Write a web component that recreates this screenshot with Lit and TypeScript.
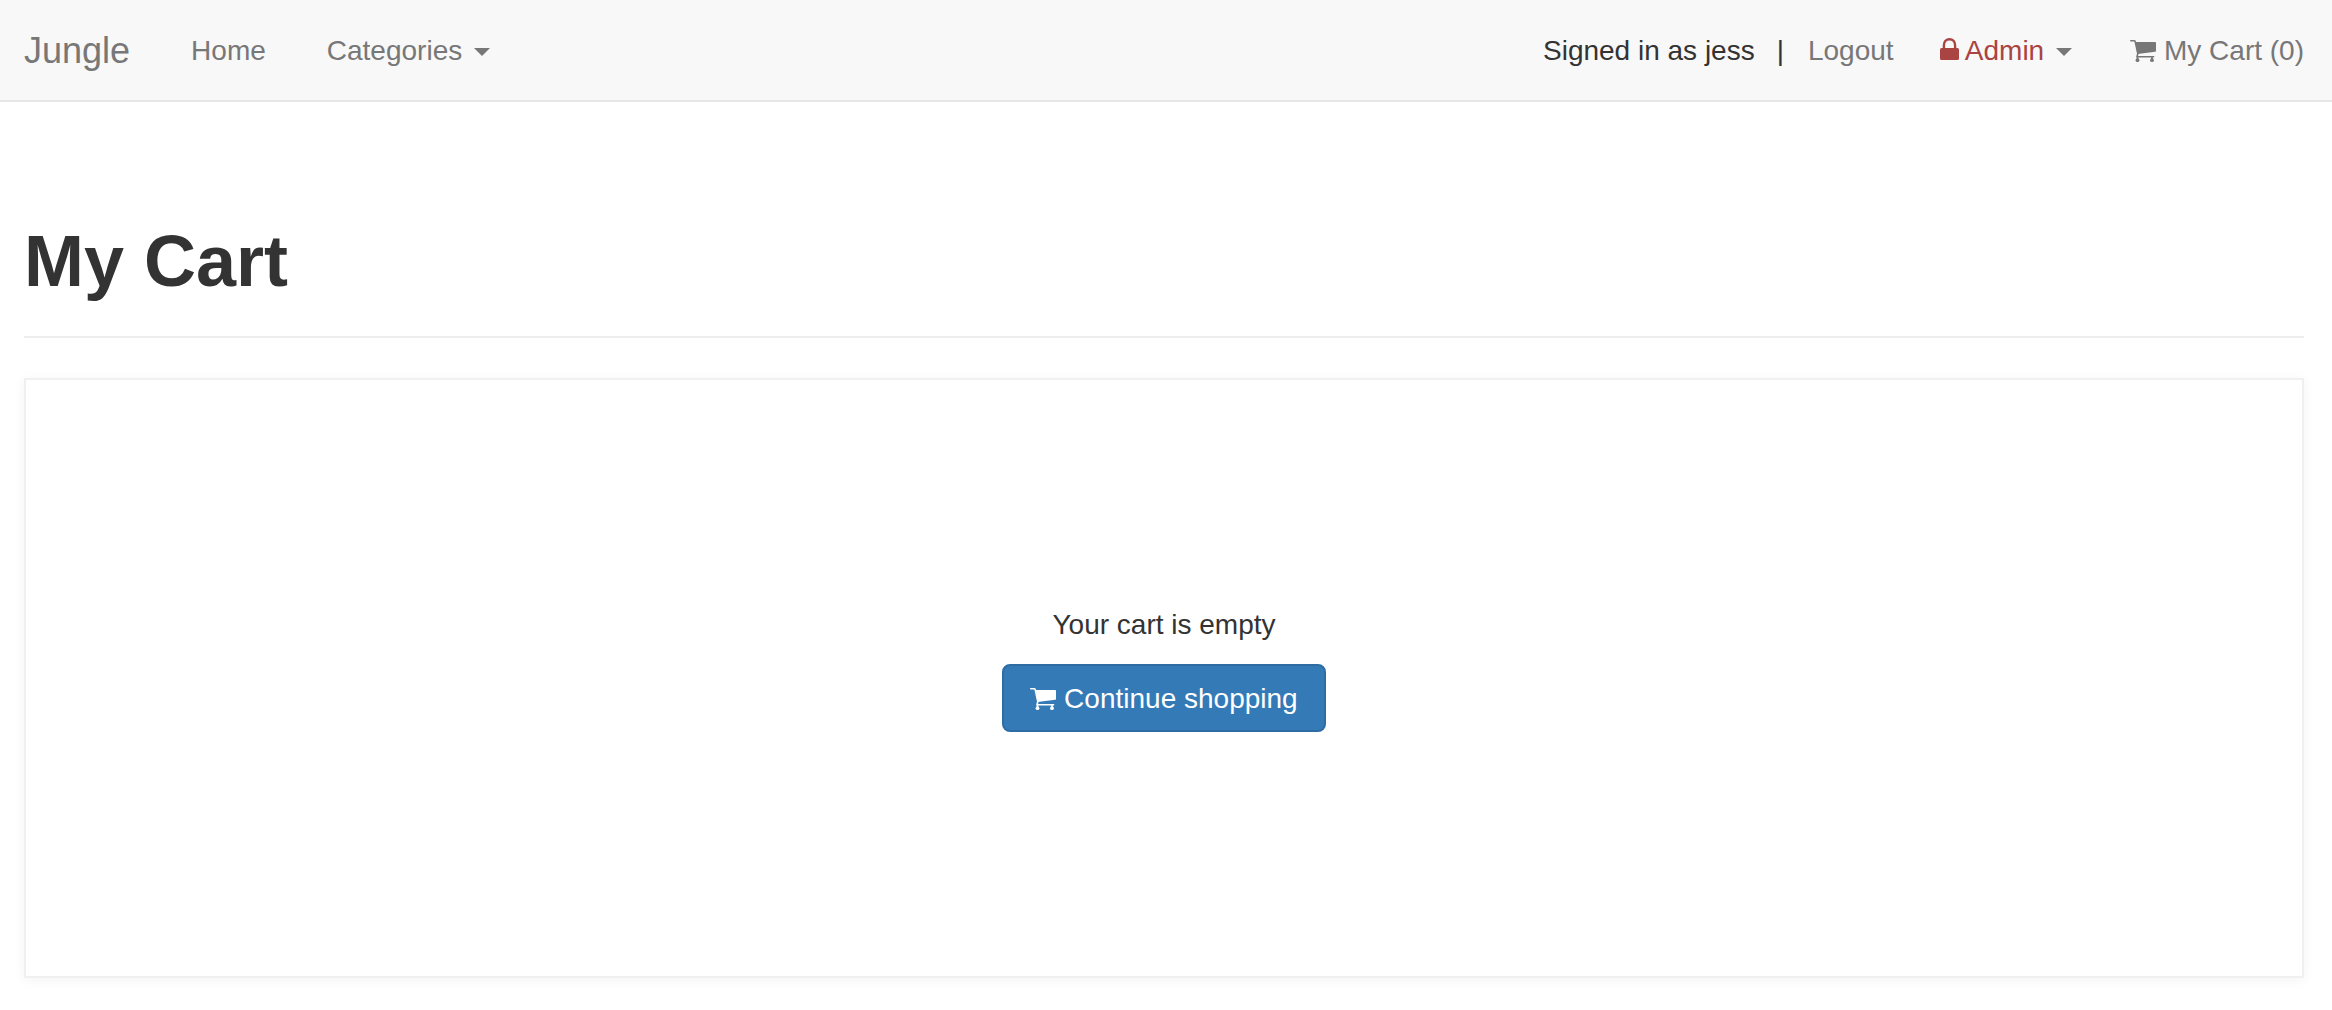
import { LitElement, html, css, svg } from "lit";
import { customElement, property } from "lit/decorators.js";

const cartIcon = html`<svg class="icon cart" viewBox="0 0 26 28" aria-hidden="true">${svg`
  <path d="M5.4 6H25.2Q26 6 26 6.8V14.8Q26 15.7 25.2 15.8L7.6 17.9Z"/>
  <path d="M.8 4.8H4.2Q5 4.8 5.2 5.6L7.8 17.6L7 20.8H23.6" fill="none" stroke="currentColor" stroke-width="1.6" stroke-linecap="round" stroke-linejoin="round"/>
  <path d="M6.7 20.8H8.3V24H6.7ZM21.2 20.8H22.8V24H21.2Z"/>
  <circle cx="7.5" cy="24.2" r="1.9"/>
  <circle cx="22" cy="24.2" r="1.9"/>`}</svg>`;

const lockIcon = html`<svg class="icon lock" viewBox="0 0 19 28" aria-hidden="true">${svg`
  <rect x="0" y="12" width="19" height="12" rx="1.6"/>
  <path d="M3.9 12.6V9.2C3.9 5.6 6.2 3.2 9.5 3.2S15.1 5.6 15.1 9.2V12.6" fill="none" stroke="currentColor" stroke-width="2.4"/>`}</svg>`;

const iconStyles = css`
  .icon {
    height: 28px;
    fill: currentColor;
    vertical-align: -4px;
  }
  .cart {
    width: 26px;
  }
  .lock {
    width: 19px;
  }
`;

@customElement("site-navbar")
export class SiteNavbar extends LitElement {
  @property() user = "";
  @property({ type: Number }) count = 0;

  static styles = [
    iconStyles,
    css`
      :host {
        display: block;
      }
      .bar {
        display: flex;
        justify-content: space-between;
        flex-wrap: wrap;
        padding: 2px 28px 0 24px;
        background: #f8f8f8;
        border-bottom: 2px solid #e7e7e7;
        line-height: 40px;
        color: #333;
      }
      .group {
        display: flex;
        flex-wrap: wrap;
        align-items: center;
        min-height: 98px;
      }
      .left {
        gap: 61px;
      }
      .brand {
        font-size: 36px;
      }
      a {
        color: #777;
        text-decoration: none;
      }
      .toggle {
        display: flex;
        align-items: center;
        gap: 12px;
        padding: 0;
        border: 0;
        background: none;
        font: inherit;
        color: #777;
        cursor: pointer;
      }
      .caret {
        border-top: 8px solid currentColor;
        border-left: 8px solid transparent;
        border-right: 8px solid transparent;
        margin-top: 2px;
      }
      .danger {
        color: #a94442;
      }
      .divider {
        margin: 0 24px 0 22px;
      }
      .admin {
        margin: 0 58px 0 46px;
      }
    `,
  ];

  render() {
    return html`
      <nav class="bar" aria-label="Main">
        <div class="group left">
          <a class="brand" href="#">Jungle</a>
          <a href="#">Home</a>
          <button class="toggle" type="button" aria-haspopup="true">
            Categories<span class="caret"></span>
          </button>
        </div>
        <div class="group">
          <span>Signed in as ${this.user}</span>
          <span class="divider">|</span>
          <a href="#">Logout</a>
          <button class="toggle admin" type="button" aria-haspopup="true">
            <span class="danger">${lockIcon} Admin</span><span class="caret"></span>
          </button>
          <a href="#">${cartIcon} My Cart (${this.count})</a>
        </div>
      </nav>
    `;
  }
}

@customElement("app-root")
export class AppRoot extends LitElement {
  static styles = [
    iconStyles,
    css`
      :host {
        display: block;
        font-family: "Liberation Sans", Arial, sans-serif;
        font-size: 28px;
        line-height: 40px;
        color: #333;
        background: #fff;
      }
      main {
        padding: 119px 28px 32px 24px;
      }
      h1 {
        margin: 0 0 40px;
        padding-bottom: 35px;
        border-bottom: 2px solid #eee;
        font-size: 72px;
        line-height: 80px;
        font-weight: 700;
      }
      .panel {
        display: flex;
        flex-direction: column;
        align-items: center;
        gap: 19px;
        padding: 225px 24px 244px;
        border: 2px solid #f0f0f0;
        box-shadow: 0 2px 12px rgba(0, 0, 0, 0.05);
      }
      p {
        margin: 0;
      }
      .button {
        padding: 13px 26px 11px;
        border: 2px solid #2e6da4;
        border-radius: 8px;
        background: #337ab7;
        color: #fff;
        text-decoration: none;
      }
    `,
  ];

  render() {
    return html`
      <site-navbar user="jess" count="0"></site-navbar>
      <main>
        <h1>My Cart</h1>
        <section class="panel">
          <p>Your cart is empty</p>
          <a class="button" href="#">${cartIcon} Continue shopping</a>
        </section>
      </main>
    `;
  }
}
